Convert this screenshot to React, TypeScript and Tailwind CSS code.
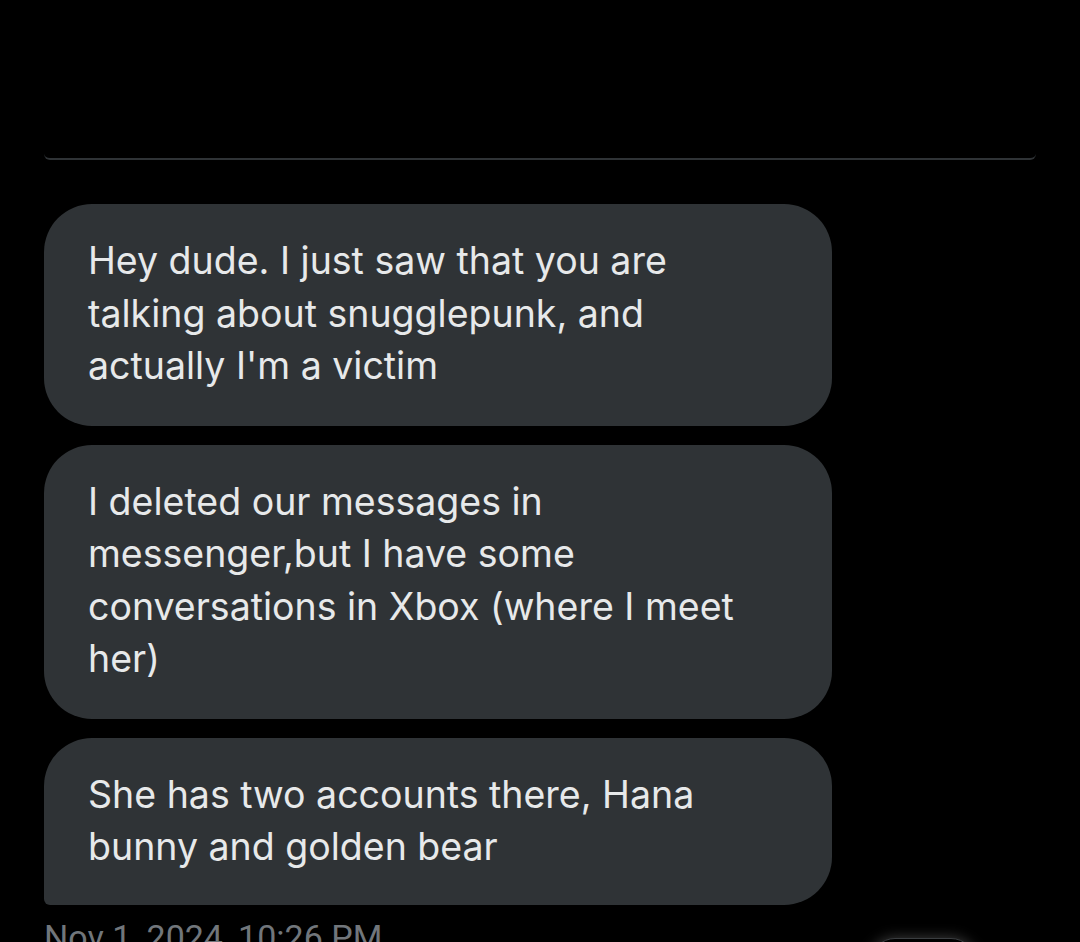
export default function App() {
  const messages = [
    { text: "Hey dude. I just saw that you are talking about snugglepunk, and actually I'm a victim", last: false },
    { text: "I deleted our messages in messenger,but I have some conversations in Xbox (where I meet her)", last: false },
    { text: "She has two accounts there, Hana bunny and golden bear", last: true },
  ];

  return (
    <div className="h-[942px] w-[1080px] overflow-hidden bg-black font-['Inter',sans-serif]">
      <div className="px-[44px] pt-[100px]">
        <div className="h-[60px] rounded-b-[6px] border-b-2 border-[#2f3336]" />
      </div>

      <div className="mt-[44px] flex flex-col gap-[19px] px-[44px]">
        {messages.map((m, i) => (
          <div
            key={i}
            className={
              m.last
                ? "w-[788px] rounded-[48px] rounded-bl-[6px] bg-[#2f3336] pl-[44px] pr-[74px] pt-[31px] pb-[31px]"
                : "w-[788px] rounded-[48px] bg-[#2f3336] pl-[44px] pr-[74px] pt-[31px] pb-[33px]"
            }
          >
            <p className="text-[37.5px] leading-[52.5px] text-[#e7e9ea]">{m.text}</p>
          </div>
        ))}
      </div>

      <div className="relative mt-[12px] px-[44px]">
        <p className="font-['Roboto',sans-serif] text-[34px] leading-[40px] text-[#71767b]">Nov 1, 2024, 10:26 PM</p>
        <div className="absolute left-[870px] top-[21px] h-[50px] w-[106px] rounded-full border border-[#3a3d40] bg-black shadow-[0_0_14px_rgba(255,255,255,0.25)]" />
      </div>
    </div>
  );
}
